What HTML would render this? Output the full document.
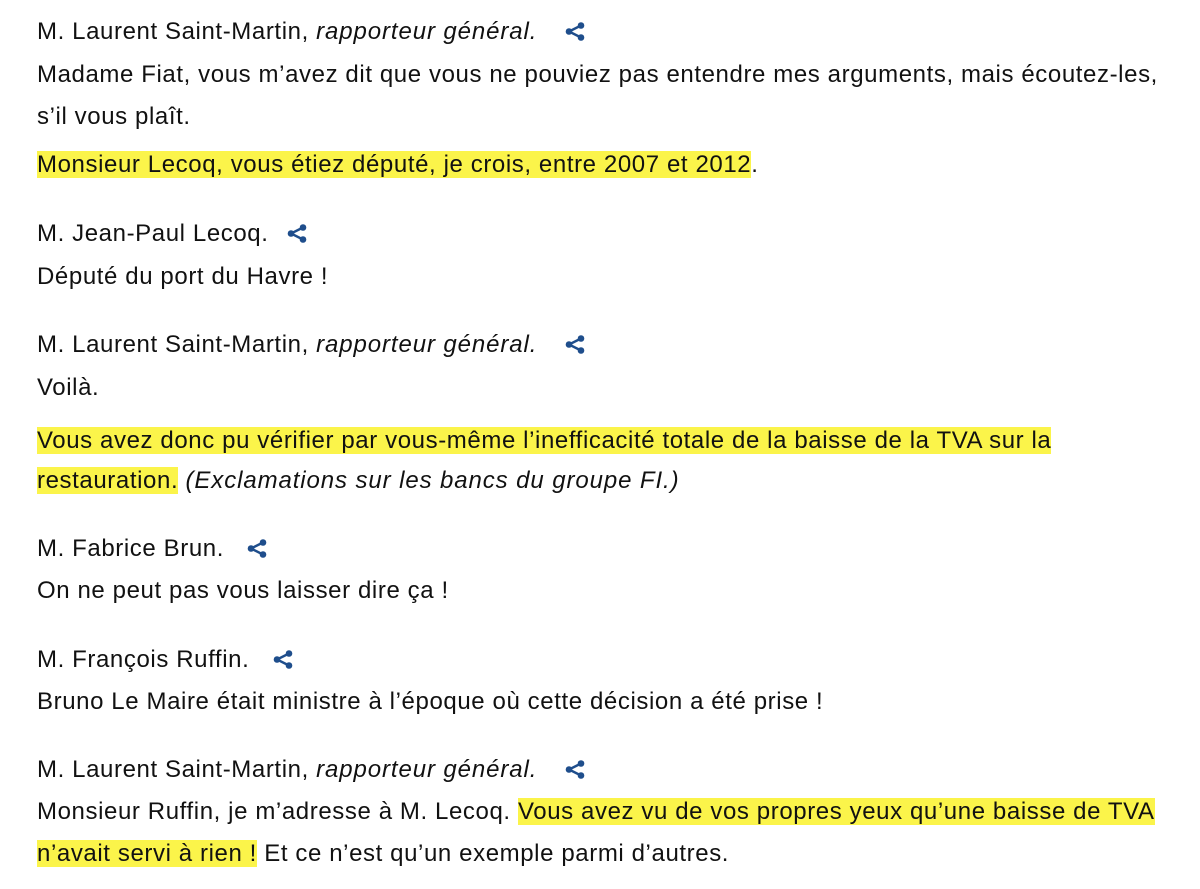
<!DOCTYPE html>
<html><head><meta charset="utf-8">
<style>
html,body{margin:0;padding:0;background:#fff;}
body{width:1200px;height:889px;position:relative;overflow:hidden;font-family:"Liberation Sans",sans-serif;font-size:24px;letter-spacing:0.6px;color:#111;}
.l{position:absolute;left:37px;line-height:34px;height:34px;white-space:nowrap;margin-top:1px;}
.h{background:#fbf44a;}
i{font-style:italic;letter-spacing:0.9px;}
svg.s{position:absolute;width:20px;height:19px;}
</style></head><body>
<div class="l" style="top:14px">M. Laurent Saint-Martin, <i>rapporteur général.</i></div>
<svg class="s" style="left:565px;top:22px" viewBox="0 0 20 19"><g fill="#1f4e8c"><circle cx="16" cy="3.5" r="3.3"/><circle cx="4" cy="9.5" r="3.3"/><circle cx="16" cy="15.5" r="3.3"/></g><path d="M16 3.5L4 9.5L16 15.5" stroke="#1f4e8c" stroke-width="2.4" fill="none"/></svg>
<div class="l" style="top:57px">Madame Fiat, vous m’avez dit que vous ne pouviez pas entendre mes arguments, mais écoutez-les,</div>
<div class="l" style="top:99px">s’il vous plaît.</div>
<div class="l" style="top:147px"><span class="h">Monsieur Lecoq, vous étiez député, je crois, entre 2007 et 2012</span>.</div>

<div class="l" style="top:216px">M. Jean-Paul Lecoq.</div>
<svg class="s" style="left:287px;top:224px" viewBox="0 0 20 19"><g fill="#1f4e8c"><circle cx="16" cy="3.5" r="3.3"/><circle cx="4" cy="9.5" r="3.3"/><circle cx="16" cy="15.5" r="3.3"/></g><path d="M16 3.5L4 9.5L16 15.5" stroke="#1f4e8c" stroke-width="2.4" fill="none"/></svg>
<div class="l" style="top:259px">Député du port du Havre !</div>

<div class="l" style="top:327px">M. Laurent Saint-Martin, <i>rapporteur général.</i></div>
<svg class="s" style="left:565px;top:335px" viewBox="0 0 20 19"><g fill="#1f4e8c"><circle cx="16" cy="3.5" r="3.3"/><circle cx="4" cy="9.5" r="3.3"/><circle cx="16" cy="15.5" r="3.3"/></g><path d="M16 3.5L4 9.5L16 15.5" stroke="#1f4e8c" stroke-width="2.4" fill="none"/></svg>
<div class="l" style="top:370px">Voilà.</div>
<div class="l" style="top:423px"><span class="h">Vous avez donc pu vérifier par vous-même l’inefficacité totale de la baisse de la TVA sur la</span></div>
<div class="l" style="top:463px"><span class="h">restauration.</span> <i>(Exclamations sur les bancs du groupe FI.)</i></div>

<div class="l" style="top:531px">M. Fabrice Brun.</div>
<svg class="s" style="left:247px;top:539px" viewBox="0 0 20 19"><g fill="#1f4e8c"><circle cx="16" cy="3.5" r="3.3"/><circle cx="4" cy="9.5" r="3.3"/><circle cx="16" cy="15.5" r="3.3"/></g><path d="M16 3.5L4 9.5L16 15.5" stroke="#1f4e8c" stroke-width="2.4" fill="none"/></svg>
<div class="l" style="top:573px">On ne peut pas vous laisser dire ça !</div>

<div class="l" style="top:642px">M. François Ruffin.</div>
<svg class="s" style="left:273px;top:650px" viewBox="0 0 20 19"><g fill="#1f4e8c"><circle cx="16" cy="3.5" r="3.3"/><circle cx="4" cy="9.5" r="3.3"/><circle cx="16" cy="15.5" r="3.3"/></g><path d="M16 3.5L4 9.5L16 15.5" stroke="#1f4e8c" stroke-width="2.4" fill="none"/></svg>
<div class="l" style="top:684px">Bruno Le Maire était ministre à l’époque où cette décision a été prise !</div>

<div class="l" style="top:752px">M. Laurent Saint-Martin, <i>rapporteur général.</i></div>
<svg class="s" style="left:565px;top:760px" viewBox="0 0 20 19"><g fill="#1f4e8c"><circle cx="16" cy="3.5" r="3.3"/><circle cx="4" cy="9.5" r="3.3"/><circle cx="16" cy="15.5" r="3.3"/></g><path d="M16 3.5L4 9.5L16 15.5" stroke="#1f4e8c" stroke-width="2.4" fill="none"/></svg>
<div class="l" style="top:794px">Monsieur Ruffin, je m’adresse à M. Lecoq. <span class="h">Vous avez vu de vos propres yeux qu’une baisse de TVA</span></div>
<div class="l" style="top:836px"><span class="h">n’avait servi à rien !</span> Et ce n’est qu’un exemple parmi d’autres.</div>
</body></html>
